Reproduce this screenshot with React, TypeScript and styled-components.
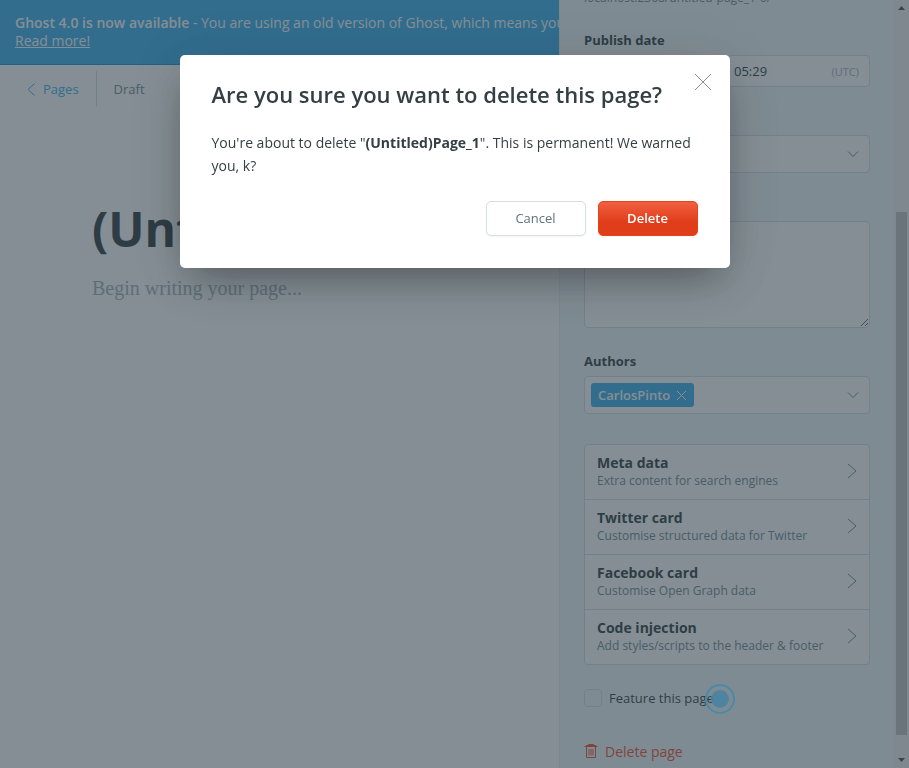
import React from "react";
import styled, { createGlobalStyle } from "styled-components";

const color = {
  text: "#343f44",
  mid: "#738a94",
  faint: "#a4b4bc",
  line: "#d3dfe5",
  panel: "#f4f8fb",
  blue: "#3eb0ef",
  red: "#f05230",
};

const GlobalStyle = createGlobalStyle`
  *, *::before, *::after { box-sizing: border-box; }
  body {
    margin: 0;
    overflow: hidden;
    background: #fff;
    color: ${color.text};
    font-family: "Open Sans", "Noto Sans", sans-serif;
    font-size: 14px;
  }
  button, input, select, textarea { font: inherit; color: inherit; margin: 0; }
  button { cursor: pointer; }
`;

const Shell = styled.div`
  display: flex;
  height: 100vh;
  overflow: hidden;
`;

const Editor = styled.main`
  flex: 1;
  min-width: 0;
  display: flex;
  flex-direction: column;
  background: #fff;
`;

const Banner = styled.div`
  height: 65px;
  padding: 14px 0 0 15px;
  overflow: hidden;
  white-space: nowrap;
  line-height: 18px;
  color: #fff;
  background: ${color.blue};
  border-bottom: 1px solid #1c92d6;
`;

const BannerLead = styled.strong`
  font-weight: 600;
`;

const BannerLink = styled.a`
  display: block;
  width: max-content;
  color: inherit;
  text-decoration: underline;
`;

const EditorHeader = styled.header`
  display: flex;
  align-items: center;
  height: 48px;
  padding-left: 27px;
  font-size: 13px;
`;

const BackLink = styled.a`
  display: flex;
  align-items: center;
  gap: 8px;
  height: 36px;
  padding-right: 17px;
  border-right: 1px solid ${color.line};
  color: ${color.blue};
  text-decoration: none;
`;

const Status = styled.span`
  padding-left: 17px;
  color: ${color.mid};
`;

const Canvas = styled.section`
  flex: 1;
  display: flex;
  flex-direction: column;
  padding: 81px 24px 0 92px;
`;

const TitleInput = styled.input`
  width: 100%;
  height: 68px;
  padding: 0;
  border: 0;
  outline: 0;
  background: none;
  font-size: 48px;
  font-weight: 700;
`;

const BodyInput = styled.textarea`
  flex: 1;
  margin-top: 10px;
  padding: 0;
  border: 0;
  outline: 0;
  resize: none;
  background: none;
  font-family: "Liberation Serif", serif;
  font-size: 20px;
  line-height: 32px;
  &::placeholder { color: ${color.faint}; opacity: 1; }
`;

const Sidebar = styled.aside`
  width: 335px;
  flex: none;
  overflow: hidden;
  padding: 0 24px;
  background: ${color.panel};
  border-left: 1px solid #e5eff5;
`;

const PageUrl = styled.p`
  margin: -12px 0 22px;
  line-height: 20px;
  font-size: 12px;
  color: ${color.mid};
`;

const Field = styled.div`
  margin-bottom: 23px;
`;

const Label = styled.label`
  display: block;
  margin-bottom: 5px;
  line-height: 20px;
  font-size: 13px;
  font-weight: 700;
`;

const Box = styled.div<{ $height: number }>`
  display: flex;
  align-items: center;
  min-width: 0;
  height: ${(p) => p.$height}px;
  padding: 0 10px 0 6px;
  background: #fff;
  border: 1px solid ${color.line};
  border-radius: 4px;
`;

const DateRow = styled.div`
  display: grid;
  grid-template-columns: 1fr 1fr;
`;

const BareInput = styled.input`
  flex: 1;
  min-width: 0;
  padding: 0;
  border: 0;
  outline: 0;
  background: none;
  font-size: 13px;
`;

const BareSelect = styled.select`
  flex: 1;
  min-width: 0;
  height: 100%;
  border: 0;
  outline: 0;
  appearance: none;
  background: none;
`;

const Zone = styled.span`
  font-size: 11px;
  color: ${color.faint};
`;

const Excerpt = styled.textarea`
  display: block;
  width: 100%;
  height: 107px;
  background: #fff;
  border: 1px solid ${color.line};
  border-radius: 4px;
  resize: vertical;
`;

const Token = styled.span`
  display: flex;
  align-items: center;
  gap: 6px;
  height: 24px;
  margin-right: auto;
  padding: 0 7px;
  border-radius: 3px;
  background: ${color.blue};
  color: #fff;
  font-size: 13px;
  font-weight: 600;
`;

const IconButton = styled.button`
  display: flex;
  padding: 0;
  border: 0;
  background: none;
`;

const Menu = styled.ul`
  margin: 30px 0 24px;
  padding: 0;
  list-style: none;
  background: #fff;
  border: 1px solid ${color.line};
  border-radius: 4px;
`;

const MenuItem = styled.li`
  & + & { border-top: 1px solid ${color.line}; }
`;

const MenuButton = styled.button`
  display: flex;
  align-items: center;
  justify-content: space-between;
  width: 100%;
  height: 54px;
  padding: 0 12px 1px;
  border: 0;
  background: none;
  text-align: left;
`;

const MenuTitle = styled.strong`
  display: block;
  line-height: 18px;
  font-size: 14px;
  font-weight: 700;
`;

const MenuText = styled.span`
  display: block;
  line-height: 17px;
  font-size: 12px;
  color: ${color.mid};
`;

const Feature = styled.label`
  display: flex;
  align-items: center;
  gap: 7px;
  width: max-content;
  height: 18px;
  margin-bottom: 34px;
  font-size: 13px;
`;

const Check = styled.input`
  appearance: none;
  width: 18px;
  height: 18px;
  border: 1px solid ${color.line};
  border-radius: 4px;
  background: ${color.panel};
`;

const DeleteLink = styled.button`
  display: flex;
  align-items: center;
  gap: 7px;
  height: 20px;
  padding: 0;
  border: 0;
  background: none;
  color: ${color.red};
`;

const ScrollTrack = styled.div`
  display: flex;
  flex-direction: column;
  align-items: center;
  width: 15px;
  flex: none;
  padding: 6px 0;
  background: #f1f1f1;
`;

const ScrollThumb = styled.div`
  flex: 523;
  width: 11px;
  background: #c1c1c1;
`;

const ScrollGap = styled.div<{ $grow: number }>`
  flex: ${(p) => p.$grow};
`;

const Overlay = styled.div`
  position: fixed;
  inset: 0;
  display: flex;
  justify-content: center;
  align-items: flex-start;
  padding-top: 55px;
  background: rgba(43, 61, 71, 0.58);
`;

const Dialog = styled.section`
  position: relative;
  width: 550px;
  max-width: 90%;
  padding: 26px 32px 32px;
  background: #fff;
  border-radius: 5px;
  box-shadow: 0 18px 40px -10px rgba(0, 0, 0, 0.35), 0 4px 60px rgba(0, 0, 0, 0.08);
`;

const CloseButton = styled(IconButton)`
  position: absolute;
  top: 18px;
  right: 18px;
`;

const DialogTitle = styled.h1`
  margin: 0 0 24px;
  line-height: 26px;
  font-size: 22px;
  font-weight: 600;
`;

const DialogText = styled.p`
  margin: 0 0 24px;
  line-height: 23px;
  font-size: 14px;
`;

const DialogActions = styled.footer`
  display: flex;
  justify-content: flex-end;
  gap: 12px;
`;

const ActionButton = styled.button<{ $danger?: boolean }>`
  width: 100px;
  height: 35px;
  padding: 0 0 1px;
  border-radius: 5px;
  border: 1px solid ${(p) => (p.$danger ? "#e8421d" : "#d5e0e4")};
  background: ${(p) => (p.$danger ? "linear-gradient(#f15f40, #e03e1b 60%)" : "#fff")};
  color: ${(p) => (p.$danger ? "#fff" : "#5e737d")};
  font-size: 13px;
  font-weight: ${(p) => (p.$danger ? 600 : 400)};
  box-shadow: 0 1px 2px rgba(0, 0, 0, 0.05);
`;

const Pointer = styled.svg`
  position: absolute;
  left: 705px;
  top: 684px;
`;

type StrokeProps = { w: number; h: number; d: string; stroke?: string };

const Stroke = ({ w, h, d, stroke = "currentColor" }: StrokeProps) => (
  <svg width={w} height={h} viewBox={`0 0 ${w} ${h}`} fill="none" stroke={stroke} aria-hidden="true">
    <path d={d} />
  </svg>
);

const ChevronDown = () => <Stroke w={12} h={8} d="M1 1.5l5 5 5-5" stroke={color.mid} />;

const Trash = () => (
  <svg width="14" height="16" viewBox="0 0 14 16" fill="none" stroke={color.red} aria-hidden="true">
    <path d="M.5 3.500h13M4.500 3.500v-2h5v2M2.500 3.500v11h9v-11M2 2.500h10M5 6v6.500M7 6v6.500M9 6v6.500" />
  </svg>
);

const menu = [
  ["Meta data", "Extra content for search engines"],
  ["Twitter card", "Customise structured data for Twitter"],
  ["Facebook card", "Customise Open Graph data"],
  ["Code injection", "Add styles/scripts to the header & footer"],
];

export default function App() {
  return (
    <>
      <GlobalStyle />
      <Shell>
        <Editor>
          <Banner>
            <BannerLead>Ghost 4.0 is now available</BannerLead> - You are using an old version of Ghost, which means you
            <BannerLink href="#read-more">Read more!</BannerLink>
          </Banner>
          <EditorHeader>
            <BackLink href="#pages">
              <Stroke w={8} h={13} d="M7.500.5l-6.500 6 6.500 6" />
              Pages
            </BackLink>
            <Status>Draft</Status>
          </EditorHeader>
          <Canvas>
            <TitleInput aria-label="Page title" defaultValue="(Untitled)Page_1" />
            <BodyInput aria-label="Page content" placeholder="Begin writing your page..." />
          </Canvas>
        </Editor>

        <Sidebar>
          <PageUrl>localhost:2368/untitled-page_1-6/</PageUrl>
          <Field>
            <Label htmlFor="date">Publish date</Label>
            <DateRow>
              <Box $height={32}>
                <BareInput id="date" />
              </Box>
              <Box $height={32}>
                <BareInput aria-label="Publish time" defaultValue="05:29" />
                <Zone>(UTC)</Zone>
              </Box>
            </DateRow>
          </Field>
          <Field>
            <Label htmlFor="tags">Tags</Label>
            <Box $height={38}>
              <BareSelect id="tags" />
              <ChevronDown />
            </Box>
          </Field>
          <Field>
            <Label htmlFor="excerpt">Excerpt</Label>
            <Excerpt id="excerpt" />
          </Field>
          <Field>
            <Label as="div">Authors</Label>
            <Box $height={38}>
              <Token>
                CarlosPinto
                <IconButton aria-label="Remove CarlosPinto">
                  <Stroke w={11} h={11} d="M1 1l9 9M10 1l-9 9" stroke="#fff" />
                </IconButton>
              </Token>
              <IconButton aria-label="Choose authors">
                <ChevronDown />
              </IconButton>
            </Box>
          </Field>
          <Menu>
            {menu.map(([title, text]) => (
              <MenuItem key={title}>
                <MenuButton>
                  <span>
                    <MenuTitle>{title}</MenuTitle>
                    <MenuText>{text}</MenuText>
                  </span>
                  <Stroke w={10} h={18} d="M1 1l8 7-8 7" stroke={color.mid} />
                </MenuButton>
              </MenuItem>
            ))}
          </Menu>
          <Feature>
            <Check type="checkbox" />
            Feature this page
          </Feature>
          <DeleteLink>
            <Trash />
            Delete page
          </DeleteLink>
        </Sidebar>

        <ScrollTrack aria-hidden="true">
          <svg width="7" height="4" viewBox="0 0 7 4"><path d="M0 4L3.500 0 7 4z" fill="#505050" /></svg>
          <ScrollGap $grow={202} />
          <ScrollThumb />
          <ScrollGap $grow={23} />
          <svg width="7" height="4" viewBox="0 0 7 4"><path d="M0 0l3.500 4L7 0z" fill="#505050" /></svg>
        </ScrollTrack>
      </Shell>

      <Overlay>
        <Pointer width="30" height="30" viewBox="0 0 30 30" aria-hidden="true">
          <circle cx="15" cy="15" r="14" fill="none" stroke="#4b88aa" strokeWidth="2" />
          <circle cx="15" cy="15" r="9" fill="#4a83a4" fillOpacity="0.9" />
        </Pointer>
        <Dialog role="dialog" aria-modal="true" aria-labelledby="dialog-title">
          <CloseButton aria-label="Close">
            <Stroke w={18} h={18} d="M1 1l16 16M17 1L1 17" stroke="#8a8f92" />
          </CloseButton>
          <DialogTitle id="dialog-title">Are you sure you want to delete this page?</DialogTitle>
          <DialogText>
            You're about to delete "<strong>(Untitled)Page_1</strong>". This is permanent! We warned you, k?
          </DialogText>
          <DialogActions>
            <ActionButton>Cancel</ActionButton>
            <ActionButton $danger>Delete</ActionButton>
          </DialogActions>
        </Dialog>
      </Overlay>
    </>
  );
}
